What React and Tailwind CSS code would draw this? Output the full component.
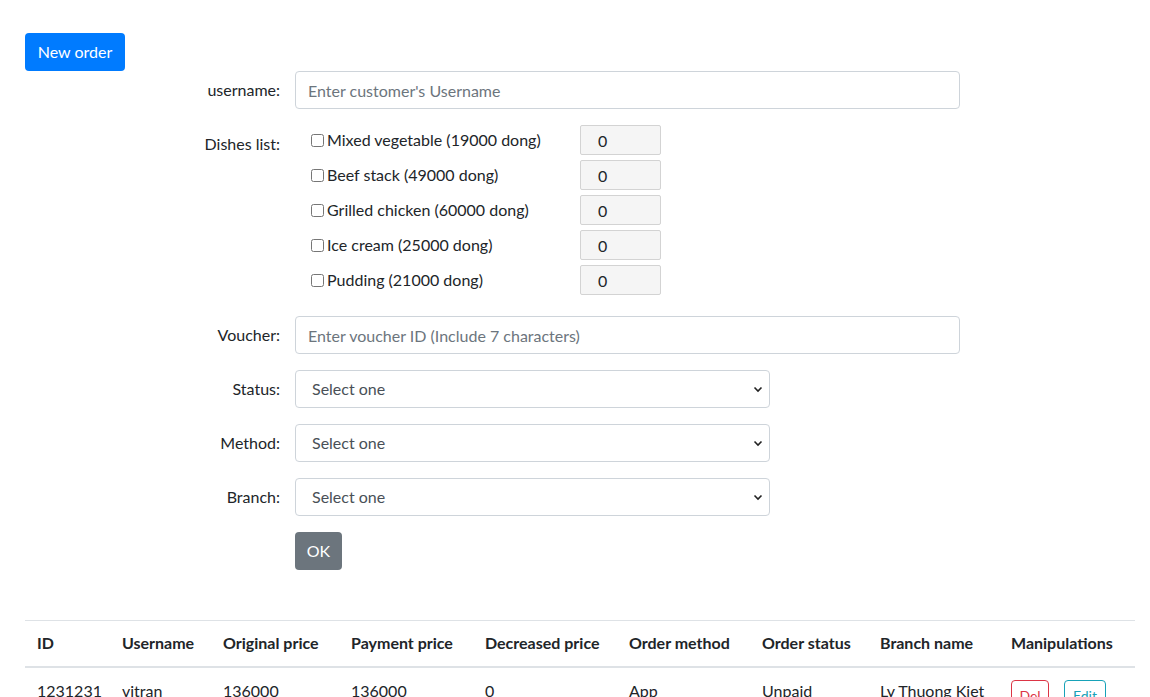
import React from "react";

const FONT = { fontFamily: "Lato, 'Open Sans', sans-serif" };

const dishes = [
  { name: "Mixed vegetable", price: 19000 },
  { name: "Beef stack", price: 49000 },
  { name: "Grilled chicken", price: 60000 },
  { name: "Ice cream", price: 25000 },
  { name: "Pudding", price: 21000 },
];

const columns = [
  { text: "ID", w: "w-[85px]" },
  { text: "Username", w: "w-[101px]" },
  { text: "Original price", w: "w-[128px]" },
  { text: "Payment price", w: "w-[134px]" },
  { text: "Decreased price", w: "w-[144px]" },
  { text: "Order method", w: "w-[133px]" },
  { text: "Order status", w: "w-[118px]" },
  { text: "Branch name", w: "w-[131px]" },
  { text: "Manipulations", w: "w-[136px]" },
];

const row = ["1231231", "vitran", "136000", "136000", "0", "App", "Unpaid", "Ly Thuong Kiet"];

const INPUT =
  "h-[38px] rounded-[4px] border border-[#ced4da] bg-white px-[12px] text-[16px] text-[#495057] placeholder:text-[#6c757d] outline-none";

const Label = ({ children, top }) => (
  <label
    className={`w-[255px] shrink-0 pr-0 text-right text-[16px] text-[#212529] ${
      top ? "pt-[7px] leading-6" : "leading-[38px]"
    }`}
  >
    {children}
  </label>
);

const Chevron = () => (
  <svg
    className="pointer-events-none absolute right-[7px] top-[15px] h-[9px] w-[10px]"
    viewBox="0 0 10 9"
    fill="none"
  >
    <path d="M1.5 2.5 5 6l3.5-3.5" stroke="#222" strokeWidth="1.6" />
  </svg>
);

const SelectRow = ({ label }) => (
  <div className="mb-4 flex">
    <Label>{label}</Label>
    <div className="relative ml-[15px] w-[475px]">
      <select
        defaultValue=""
        className="h-[38px] w-full appearance-none rounded-[4px] border border-[#ced4da] bg-white pl-[16px] text-[16px] text-[#495057] outline-none"
        style={FONT}
      >
        <option value="">Select one</option>
      </select>
      <Chevron />
    </div>
  </div>
);

export default function App() {
  return (
    <div className="min-h-[697px] bg-white pt-[33px] text-[#212529]" style={FONT}>
      <div className="px-[25px]">
        <button className="h-[38px] w-[100px] rounded-[4px] bg-[#007bff] text-[16px] text-white">
          New order
        </button>
      </div>

      {/* Form */}
      <form className="pl-[25px]">
        <div className="mb-4 flex">
          <Label>username:</Label>
          <input
            className={`${INPUT} ml-[15px] w-[665px]`}
            style={FONT}
            placeholder="Enter customer's Username"
          />
        </div>

        <div className="mb-4 flex">
          <Label top>Dishes list:</Label>
          <div className="ml-[15px] flex flex-col">
            {dishes.map((d) => (
              <div key={d.name} className="mb-[5px] flex h-[30px] items-center">
                <label className="flex w-[285px] items-center pl-[16px] text-[16px] text-[#212529]">
                  <input type="checkbox" className="mr-[3px] h-[13px] w-[13px]" />
                  {d.name} ({d.price} dong)
                </label>
                <input
                  className="h-[30px] w-[81px] rounded-[2px] border border-[#d3d3d3] bg-[#f5f5f5] pl-[17px] text-[16px] text-[#212529] outline-none"
                  style={FONT}
                  defaultValue="0"
                />
              </div>
            ))}
          </div>
        </div>

        <div className="mb-4 flex">
          <Label>Voucher:</Label>
          <input
            className={`${INPUT} ml-[15px] w-[665px]`}
            style={FONT}
            placeholder="Enter voucher ID (Include 7 characters)"
          />
        </div>

        <SelectRow label="Status:" />
        <SelectRow label="Method:" />
        <SelectRow label="Branch:" />

        <div className="flex">
          <div className="w-[270px] shrink-0" />
          <button
            type="button"
            className="h-[38px] w-[47px] rounded-[4px] bg-[#6c757d] text-[16px] text-white"
          >
            OK
          </button>
        </div>
      </form>

      {/* Table */}
      <div className="mt-[50px] px-[25px]">
        <table className="w-[1110px] table-fixed border-collapse text-[16px]">
          <thead>
            <tr className="border-t border-[#dee2e6]">
              {columns.map((c) => (
                <th
                  key={c.text}
                  className={`${c.w} h-[46px] border-b-2 border-[#dee2e6] px-[12px] text-left align-middle font-bold text-[#212529]`}
                >
                  {c.text}
                </th>
              ))}
            </tr>
          </thead>
          <tbody>
            <tr>
              {row.map((v, i) => (
                <td key={i} className="px-[12px] pt-[11px] align-top leading-6">
                  {v}
                </td>
              ))}
              <td className="px-[12px] pt-[12px] align-top">
                <div className="flex gap-[15px]">
                  <button className="h-[31px] w-[38px] rounded-[4px] border border-[#dc3545] text-[14px] text-[#dc3545]">
                    Del
                  </button>
                  <button className="h-[31px] w-[42px] rounded-[4px] border border-[#17a2b8] text-[14px] text-[#17a2b8]">
                    Edit
                  </button>
                </div>
              </td>
            </tr>
          </tbody>
        </table>
      </div>
    </div>
  );
}
